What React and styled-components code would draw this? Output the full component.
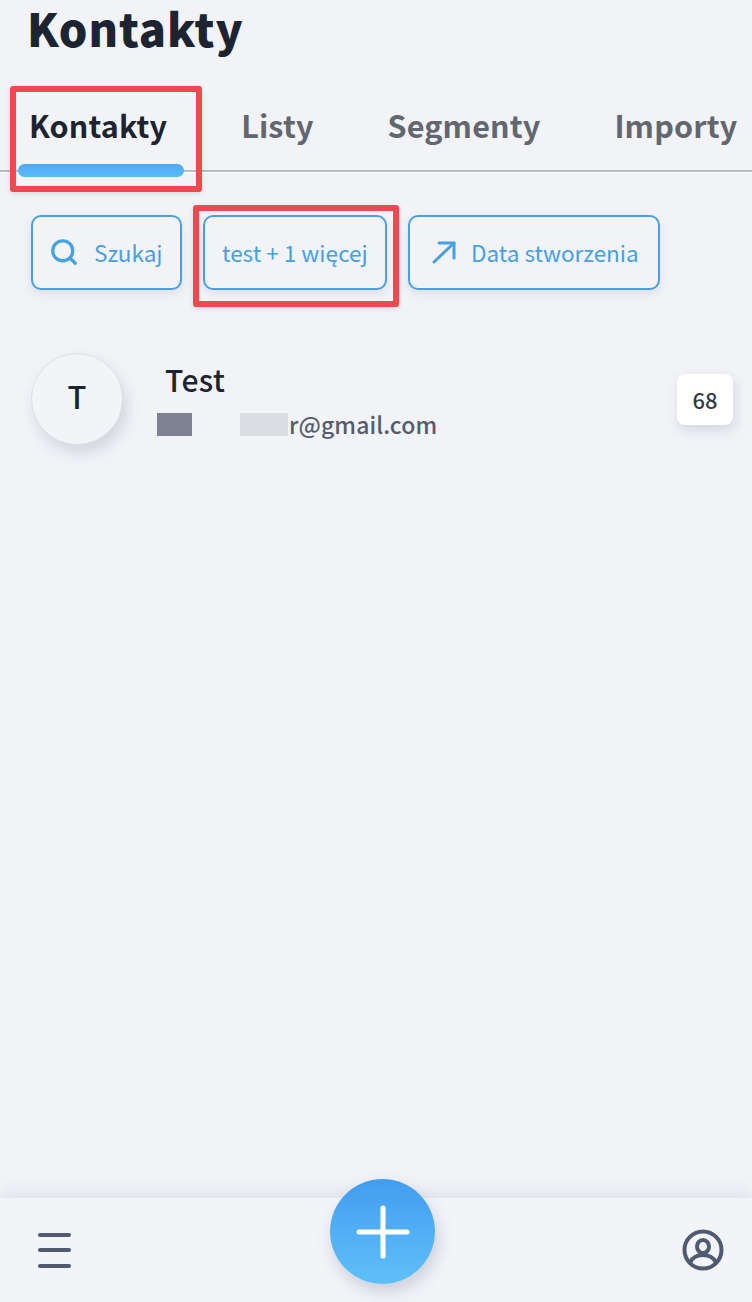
import React from 'react';
import styled, { createGlobalStyle } from 'styled-components';
import { Search, Plus } from 'lucide-react';

const GlobalStyle = createGlobalStyle`
  html, body { margin: 0; padding: 0; height: 100%; background: #f2f3f7; }
  body { font-family: "Noto Sans CJK SC", "Noto Sans", sans-serif; overflow: hidden; }
  #root { height: 100%; }
`;

const Page = styled.div`
  position: relative; display: flex; flex-direction: column; width: 752px; height: 1302px; overflow: hidden; background: #f2f3f7;
`;

const Title = styled.h1`
  margin: 0; padding: 0 0 0 27px; height: 87px; font-size: 45px; line-height: 56px; font-weight: 900; letter-spacing: 0.9px; color: #1b2430;
`;

const TabBar = styled.div`
  display: flex; gap: 74px; height: 85px; padding-left: 29px; border-bottom: 2px solid #b7bac2; box-sizing: border-box; box-shadow: 0 1px 0 #fff;
`;

const Tab = styled.div`
  position: relative; padding-top: 16px; font-size: 30.5px; line-height: 44px; font-weight: 700; letter-spacing: 0.15px; white-space: nowrap;
  color: ${p => (p.$active ? '#1b2430' : '#62666f')};
`;

const TabIndicator = styled.div`
  position: absolute; left: -11px; width: 166px; top: 77px; height: 13px; border-radius: 7px; background: linear-gradient(#4fa9f2, #5cbbf7);
`;

const Annotation = styled.div`
  position: absolute; left: ${p => p.$left}px; top: ${p => p.$top}px; width: ${p => p.$width}px; height: ${p => p.$height}px;
  box-sizing: border-box; border: 6px solid #ec4a50; border-radius: 3px; pointer-events: none; box-shadow: 0 2px 5px rgba(40, 40, 60, 0.12);
`;

const Filters = styled.div`
  display: flex; gap: 21px; padding: 43px 0 0 31px;
`;

const FilterButton = styled.button`
  display: flex; align-items: center; gap: ${p => p.$gap || 0}px; height: 75px; width: ${p => p.$width}px; padding: 0 0 2px ${p => p.$pad}px; box-sizing: border-box;
  border: 2px solid #4a9fe2; border-radius: 10px; background: #f2f3f7; box-shadow: 0 4px 10px rgba(90, 100, 130, 0.12);
  font-family: inherit; font-size: 22.5px; line-height: 30px; color: #45a0e4; white-space: nowrap;
`;

const ContactRow = styled.div`
  display: flex; align-items: flex-start; padding: 63px 19px 0 31px;
`;

const Avatar = styled.div`
  flex: none; display: flex; align-items: center; justify-content: center; width: 92px; height: 92px; border-radius: 50%; box-sizing: border-box;
  border: 1px solid #dfe0e5; background: #f3f4f8; box-shadow: 4px 8px 14px rgba(90, 100, 130, 0.2);
  font-size: 31px; font-weight: 500; color: #1b2430; padding-bottom: 8px;
`;

const ContactInfo = styled.div`
  flex: 1; padding: 4px 0 0 34px;
`;

const ContactName = styled.div`
  padding-left: 8px; font-size: 30px; line-height: 44px; font-weight: 500; letter-spacing: 0.4px; color: #1b2430;
`;

const ContactEmail = styled.div`
  display: flex; align-items: center; height: 28px; margin-top: 9px; font-size: 23px; line-height: 28px; font-weight: 500; letter-spacing: 0.1px; color: #555c6b;
`;

const Redaction = styled.span`
  flex: none; height: 23px; width: ${p => p.$width}px; margin-right: ${p => p.$after}px; background: ${p => p.$color};
`;

const Badge = styled.div`
  flex: none; display: flex; align-items: center; justify-content: center; width: 56px; height: 51px; margin-top: 21px; padding-bottom: 2px; box-sizing: border-box; border-radius: 8px;
  background: #fff; box-shadow: 2px 5px 12px rgba(90, 100, 130, 0.2);
  font-size: 22px; font-weight: 500; color: #333a45;
`;

const Spacer = styled.div`flex: 1;`;

const BottomBar = styled.div`
  display: flex; align-items: center; justify-content: space-between; height: 104px; padding: 0 28px 0 38px; box-sizing: border-box;
  background: #f3f4f8; box-shadow: 0 -6px 14px rgba(90, 100, 130, 0.1);
`;

const Hamburger = styled.div`
  display: flex; flex-direction: column; gap: 11.5px; width: 33px;
`;

const HamburgerLine = styled.span`
  display: block; height: 4px; border-radius: 2px; background: #505a70;
`;

const Fab = styled.div`
  position: absolute; left: 330px; top: 1179px; display: flex; align-items: center; justify-content: center; width: 105px; height: 105px; border-radius: 50%;
  background: linear-gradient(#429df0, #5fc0f8); box-shadow: 3px 8px 16px rgba(90, 100, 130, 0.25); color: #fff;
`;

const TrendIcon = () => (
  <svg width="26" height="24" viewBox="0 0 26 24" fill="none" stroke="currentColor" strokeWidth="3" strokeLinecap="round" strokeLinejoin="round">
    <path d="M3 22 L23 3" />
    <path d="M8 3 H23 V18" />
  </svg>
);

const ProfileIcon = () => (
  <svg width="42" height="42" viewBox="0 0 42 42" fill="none" stroke="#505a70" strokeWidth="4">
    <circle cx="21" cy="21" r="18.500" />
    <ellipse cx="21" cy="17.500" rx="6" ry="6.500" />
    <path d="M8 33.500c2.500-5 7-7.500 13-7.500s10.500 2.500 13 7.500" />
  </svg>
);

export default function App() {
  return (
    <Page>
      <GlobalStyle />
      <Title>Kontakty</Title>
      <TabBar>
        <Tab $active>Kontakty<TabIndicator /></Tab>
        <Tab>Listy</Tab>
        <Tab>Segmenty</Tab>
        <Tab>Importy</Tab>
      </TabBar>
      <Filters>
        <FilterButton $width={151} $pad={16} $gap={15}>
          <Search size={30} strokeWidth={2.6} />Szukaj
        </FilterButton>
        <FilterButton $width={184} $pad={17}>test + 1 więcej</FilterButton>
        <FilterButton $width={252} $pad={21} $gap={14}>
          <TrendIcon />Data stworzenia
        </FilterButton>
      </Filters>
      <ContactRow>
        <Avatar>T</Avatar>
        <ContactInfo>
          <ContactName>Test</ContactName>
          <ContactEmail>
            <Redaction $width={35} $after={48} $color="#7f8391" />
            <Redaction $width={48} $after={1} $color="#dcdde2" />
            r@gmail.com
          </ContactEmail>
        </ContactInfo>
        <Badge>68</Badge>
      </ContactRow>
      <Spacer />
      <BottomBar>
        <Hamburger>
          <HamburgerLine />
          <HamburgerLine />
          <HamburgerLine />
        </Hamburger>
        <ProfileIcon />
      </BottomBar>
      <Fab><Plus size={82} strokeWidth={1.5} /></Fab>
      <Annotation $left={10} $top={86} $width={192} $height={106} />
      <Annotation $left={193} $top={205} $width={206} $height={102} />
    </Page>
  );
}
